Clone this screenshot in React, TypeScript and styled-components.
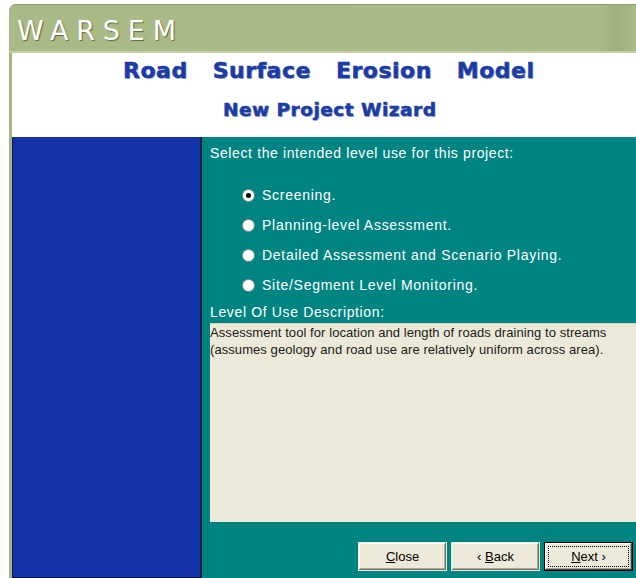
import styled, { createGlobalStyle } from 'styled-components';

const Global = createGlobalStyle`
  html, body {
    margin: 0;
    padding: 0;
    background: #ffffff;
    overflow: hidden;
  }
`

const Page = styled.div`
  width: 636px;
  height: 578px;
  padding: 4px 0 0 9px;
  box-sizing: border-box;
`

const Window = styled.div`
  display: flex;
  flex-direction: column;
  height: 100%;
`

const TitleBar = styled.div`
  height: 49px;
  box-sizing: border-box;
  border-top: 1px solid #8d9c6a;
  border-top-left-radius: 7px;
  background: linear-gradient(90deg, #a9ba86 0%, #abbc88 94%, #9fb07c 97%, #adbd8a 100%);
  box-shadow: inset 0 -2px 0 #c4d0a8;
  display: flex;
  align-items: center;
  padding-left: 8px;
`

const AppName = styled.div`
  font-family: "DejaVu Sans", Verdana, sans-serif;
  font-size: 27px;
  letter-spacing: 7.8px;
  color: #ffffff;
  text-shadow: 1px 1px 1px #5d6a45;
  margin-top: 2px;
`

const Frame = styled.div`
  flex: 1;
  display: flex;
  flex-direction: column;
  border-left: 3px solid #a6b47f;
`

const Header = styled.div`
  height: 84px;
  background: #ffffff;
  display: flex;
  flex-direction: column;
  align-items: flex-start;
`

const TitleRow = styled.div<{ $left: number; $top: number; $gap: number; $size: number }>`
  display: flex;
  gap: ${(p) => p.$gap}px;
  margin: ${(p) => p.$top}px 0 0 ${(p) => p.$left}px;
  font-family: "DejaVu Sans", Verdana, sans-serif;
  font-weight: bold;
  font-size: ${(p) => p.$size}px;
  letter-spacing: 0.5px;
  line-height: 1;
  color: #1b3ca7;
  -webkit-text-stroke: 0.5px #1b3ca7;
  text-shadow: 1px 1px 0 rgba(10, 25, 90, 0.35);
`

const Body = styled.div`
  flex: 1;
  display: flex;
`

const Sidebar = styled.div`
  width: 190px;
  box-sizing: border-box;
  background: #1533a9;
  border-left: 1px solid #0b1b5c;
  border-right: 2px solid #0c2236;
  border-bottom: 1px solid #0a0f30;
`

const Main = styled.div`
  flex: 1;
  background: #008482;
  display: flex;
  flex-direction: column;
  padding: 8px 0 0 8px;
  font-family: "Liberation Sans", Arial, sans-serif;
  color: #ffffff;
`

const Prompt = styled.div`
  font-size: 14px;
  line-height: 16px;
  letter-spacing: 0.62px;
`

const Options = styled.div`
  display: flex;
  flex-direction: column;
  padding: 19px 0 0 32px;
`

const Option = styled.label`
  height: 30px;
  display: flex;
  align-items: center;
  gap: 7px;
  font-size: 14px;
  letter-spacing: 0.72px;
`

const Radio = styled.span<{ $on?: boolean }>`
  width: 13px;
  height: 13px;
  box-sizing: border-box;
  border-radius: 50%;
  border: 1px solid #8f9a92;
  background: radial-gradient(circle at 40% 40%, #ffffff 55%, #dcdcd0 100%);
  display: flex;
  align-items: center;
  justify-content: center;
  &::after {
    content: '';
    width: 5px;
    height: 5px;
    border-radius: 50%;
    background: ${(p) => (p.$on ? '#000000' : 'transparent')};
  }
`

const DescLabel = styled.div`
  font-size: 14px;
  line-height: 18px;
  letter-spacing: 0.64px;
  margin-top: 3px;
`

const DescBox = styled.div`
  height: 199px;
  margin-top: 2px;
  box-sizing: border-box;
  background: #ece9d8;
  border-top: 1px solid #d8d4c0;
  color: #1a1a1a;
  font-size: 13px;
  line-height: 17px;
  letter-spacing: 0.07px;
  padding: 0;
`

const Buttons = styled.div`
  display: flex;
  justify-content: flex-end;
  gap: 4px;
  margin-top: 20px;
  padding-right: 3px;
`

const Button = styled.button<{ $default?: boolean }>`
  width: 89px;
  height: 29px;
  box-sizing: border-box;
  background: #ece9d8;
  border: 1px solid ${(p) => (p.$default ? '#000000' : '#ece9d8')};
  box-shadow: ${(p) =>
    p.$default
      ? 'inset -1px -1px 0 #404040, inset 1px 1px 0 #ffffff, inset -2px -2px 0 #aca899'
      : 'inset -1px -1px 0 #716f64, inset 1px 1px 0 #ffffff, inset -2px -2px 0 #aca899'};
  font-family: "Liberation Sans", Arial, sans-serif;
  font-size: 13px;
  color: #000000;
  padding: 0;
  display: flex;
  align-items: center;
  justify-content: center;
  position: relative;
  u { text-decoration: underline; }
`

const FocusRing = styled.span`
  position: absolute;
  inset: 3px;
  border: 1px dotted #000000;
`

const titleWords = ['Road', 'Surface', 'Erosion', 'Model'];
const levels = [
  'Screening.',
  'Planning-level Assessment.',
  'Detailed Assessment and Scenario Playing.',
  'Site/Segment Level Monitoring.',
];

function App() {
  return (
    <>
      <Global />
      <Page>
        <Window>
          <TitleBar>
            <AppName>WARSEM</AppName>
          </TitleBar>
          <Frame>
            <Header>
              <TitleRow $left={111} $top={7} $gap={25} $size={22}>
                {titleWords.map((w) => (
                  <span key={w}>{w}</span>
                ))}
              </TitleRow>
              <TitleRow $left={211} $top={19} $gap={6} $size={18.5}>
                <span>New Project Wizard</span>
              </TitleRow>
            </Header>
            <Body>
              <Sidebar />
              <Main>
                <Prompt>Select the intended level use for this project:</Prompt>
                <Options>
                  {levels.map((l, i) => (
                    <Option key={l}>
                      <Radio $on={i === 0} />
                      {l}
                    </Option>
                  ))}
                </Options>
                <DescLabel>Level Of Use Description:</DescLabel>
                <DescBox>
                  Assessment tool for location and length of roads draining to streams
                  <br />
                  (assumes geology and road use are relatively uniform across area).
                </DescBox>
                <Buttons>
                  <Button>
                    <span><u>C</u>lose</span>
                  </Button>
                  <Button>
                    <span>‹ <u>B</u>ack</span>
                  </Button>
                  <Button $default>
                    <FocusRing />
                    <span><u>N</u>ext ›</span>
                  </Button>
                </Buttons>
              </Main>
            </Body>
          </Frame>
        </Window>
      </Page>
    </>
  );
}

export default App;
